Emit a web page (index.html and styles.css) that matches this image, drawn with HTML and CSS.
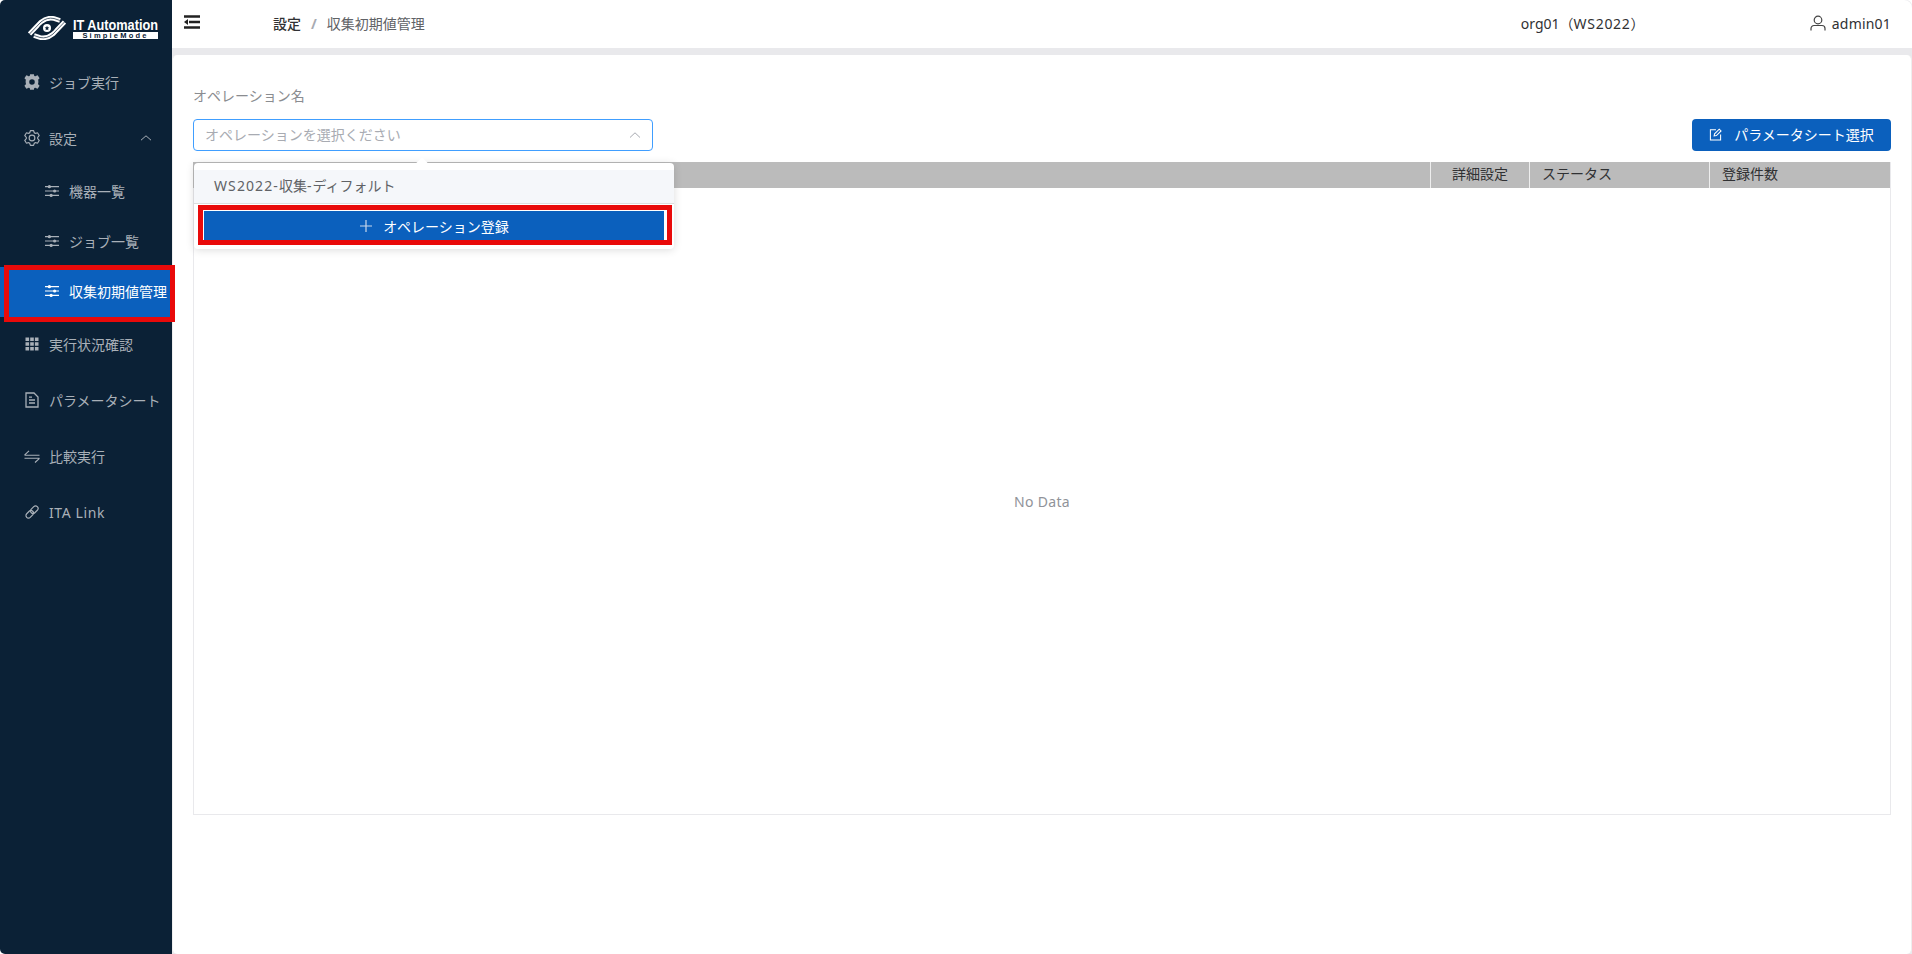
FILE: index.html
```html
<!DOCTYPE html>
<html lang="ja">
<head>
<meta charset="utf-8">
<title>収集初期値管理</title>
<link rel="stylesheet" href="styles.css">
</head>
<body>
<div class="app">
  <aside class="sidebar">
    <div class="logo">
      <svg class="logo-mark" viewBox="0 0 38 24" width="38" height="24">
        <g fill="none" stroke="#fff" stroke-linecap="butt">
          <path d="M1.500 18 L13 6 Q19 1 26 2.500 L32 4.500" stroke-width="4.600"/>
          <path d="M36.500 6 L25 18 Q19 23 12 21.500 L6 19.500" stroke-width="4.600"/>
        </g>
        <g fill="none" stroke="#0b2136" stroke-width=".7">
          <path d="M1.500 18 L13 6 Q19 1 26 2.500 L32 4.500"/>
          <path d="M36.500 6 L25 18 Q19 23 12 21.500 L6 19.500"/>
        </g>
        <ellipse cx="19" cy="12" rx="8.500" ry="5.500" fill="#0b2136" transform="rotate(-14 19 12)"/>
        <circle cx="19" cy="12" r="4" fill="#fff"/>
        <path d="M19 9.800l.7 1.500 1.600.2-1.200 1.100.3 1.600-1.400-.8-1.400.8.300-1.600-1.200-1.100 1.600-.2z" fill="#0b2136"/>
      </svg>
      <div class="logo-text">
        <span class="logo-title">IT Automation</span>
        <span class="logo-sub">SimpleMode</span>
      </div>
    </div>
    <nav class="nav">
      <a class="row">
        <svg class="ic" viewBox="0.500 0.500 15 15"><circle cx="8" cy="8" r="4.300" fill="none" stroke="currentColor" stroke-width="3.400"/><path d="M6.200 0.800h3.600l.5 2.600h-4.600zM6.200 15.200h3.600l.5-2.600h-4.600zM0.900 4.600l1.800-3 2.500 1-2.300 3.900zM15.100 11.400l-1.800 3-2.500-1 2.300-3.900zM0.900 11.400l1.800 3 2.500-1-2.300-3.900zM15.100 4.600l-1.800-3-2.500 1 2.300 3.900z" fill="currentColor"/></svg>
        <span>ジョブ実行</span>
      </a>
      <a class="row">
        <svg class="ic" viewBox="64 64 896 896"><path fill="currentColor" d="M600.704 64a32 32 0 0 1 30.464 22.208l35.2 109.376c14.784 7.232 28.928 15.36 42.432 24.512l112.384-24.192a32 32 0 0 1 34.432 15.36L944.32 364.8a32 32 0 0 1-4.032 37.504l-77.12 85.12a357.12 357.12 0 0 1 0 49.024l77.12 85.248a32 32 0 0 1 4.032 37.504l-88.704 153.6a32 32 0 0 1-34.432 15.296L708.8 803.904c-13.44 9.088-27.648 17.28-42.368 24.512l-35.264 109.376A32 32 0 0 1 600.704 960H423.296a32 32 0 0 1-30.464-22.208L357.696 828.48a351.616 351.616 0 0 1-42.56-24.64l-112.32 24.256a32 32 0 0 1-34.432-15.36L79.68 659.2a32 32 0 0 1 4.032-37.504l77.12-85.248a357.12 357.12 0 0 1 0-48.896l-77.12-85.248A32 32 0 0 1 79.68 364.8l88.704-153.6a32 32 0 0 1 34.432-15.296l112.32 24.256c13.568-9.152 27.776-17.408 42.56-24.64l35.2-109.312A32 32 0 0 1 423.232 64H600.64zm-23.424 64H446.72l-36.352 113.088-24.512 11.968a294.113 294.113 0 0 0-34.816 20.096l-22.656 15.36-116.224-25.088-65.28 113.152 79.68 88.192-1.92 27.136a293.12 293.12 0 0 0 0 40.192l1.920 27.136-79.808 88.192 65.344 113.152 116.224-25.024 22.656 15.296a294.113 294.113 0 0 0 34.816 20.096l24.512 11.968L446.72 896h130.688l36.48-113.152 24.448-11.904a288.282 288.282 0 0 0 34.752-20.096l22.592-15.296 116.288 25.024 65.28-113.152-79.744-88.192 1.92-27.136a293.12 293.12 0 0 0 0-40.256l-1.92-27.136 79.808-88.128-65.344-113.152-116.288 24.96-22.592-15.232a287.616 287.616 0 0 0-34.752-20.096l-24.448-11.904L577.344 128zM512 320a192 192 0 1 1 0 384 192 192 0 0 1 0-384zm0 64a128 128 0 1 0 0 256 128 128 0 0 0 0-256z"/></svg>
        <span>設定</span>
        <svg class="chev" viewBox="0 0 12 12"><path d="M1 8.200 6 3.800l5 4.400" fill="none" stroke="currentColor" stroke-width="1"/></svg>
      </a>
      <a class="row sub">
        <svg class="ic" viewBox="0 0 16 16"><path d="M0 3h16M0 8h16M0 13h16" stroke="currentColor" stroke-width="1.400" fill="none"/><circle cx="5" cy="3" r="1.800" fill="currentColor"/><circle cx="11" cy="8" r="1.800" fill="currentColor"/><circle cx="7" cy="13" r="1.800" fill="currentColor"/></svg>
        <span>機器一覧</span>
      </a>
      <a class="row sub">
        <svg class="ic" viewBox="0 0 16 16"><path d="M0 3h16M0 8h16M0 13h16" stroke="currentColor" stroke-width="1.400" fill="none"/><circle cx="5" cy="3" r="1.800" fill="currentColor"/><circle cx="11" cy="8" r="1.800" fill="currentColor"/><circle cx="7" cy="13" r="1.800" fill="currentColor"/></svg>
        <span>ジョブ一覧</span>
      </a>
      <a class="row sub active">
        <svg class="ic" viewBox="0 0 16 16"><path d="M0 3h16M0 8h16M0 13h16" stroke="currentColor" stroke-width="1.400" fill="none"/><circle cx="5" cy="3" r="1.800" fill="currentColor"/><circle cx="11" cy="8" r="1.800" fill="currentColor"/><circle cx="7" cy="13" r="1.800" fill="currentColor"/></svg>
        <span>収集初期値管理</span>
      </a>
      <a class="row">
        <svg class="ic" viewBox="0 0 16 16"><path fill="currentColor" d="M1.500 1.500h3.600v3.600H1.500zM6.200 1.500h3.600v3.600H6.200zM10.900 1.500h3.600v3.600h-3.600zM1.500 6.200h3.600v3.600H1.500zM6.200 6.200h3.600v3.600H6.200zM10.900 6.200h3.600v3.600h-3.600zM1.500 10.900h3.600v3.600H1.500zM6.200 10.900h3.600v3.600H6.200zM10.900 10.900h3.600v3.600h-3.600z"/></svg>
        <span>実行状況確認</span>
      </a>
      <a class="row">
        <svg class="ic" viewBox="0 0 16 16"><path d="M2 1h8l4 4v10H2zM5 8h6M5 11h6M5 5.200h3" fill="none" stroke="currentColor" stroke-width="1.300"/></svg>
        <span>パラメータシート</span>
      </a>
      <a class="row">
        <svg class="ic" viewBox="0 0 16 16"><path d="M0.500 7.200 5 2.800M0.500 7.200H15.500M15.500 10.300H0.500M15.500 10.300 11 14.500" fill="none" stroke="currentColor" stroke-width="1.100"/></svg>
        <span>比較実行</span>
      </a>
      <a class="row">
        <svg class="ic" viewBox="0 0 16 16"><g fill="none" stroke="currentColor" stroke-width="1.200" transform="rotate(-45 8 8)"><rect x="0.500" y="5.500" width="8.500" height="5" rx="2.500"/><rect x="7" y="5.500" width="8.500" height="5" rx="2.500"/></g></svg>
        <span class="ls-link">ITA Link</span>
      </a>
    </nav>
  </aside>

  <div class="main">
    <header class="topbar">
      <svg class="fold" viewBox="0 0 16 14"><path d="M0 1.500h16M5 7H16M0 12.500h16" stroke="#222" stroke-width="2.400" fill="none"/><path d="M4 4 0 7l4 3z" fill="#222"/></svg>
      <div class="crumbs">
        <b>設定</b><i>/</i><span>収集初期値管理</span>
      </div>
      <div class="org">org01（<span class="ls-org">WS2022</span>）</div>
      <div class="user">
        <svg viewBox="0 0 16 16" width="16" height="16"><circle cx="8" cy="5" r="3.800" fill="none" stroke="#444" stroke-width="1.200"/><path d="M1 15.500v-2a3 3 0 0 1 3-3h8a3 3 0 0 1 3 3v2" fill="none" stroke="#444" stroke-width="1.200"/></svg>
        <span class="ls-user">admin01</span>
      </div>
    </header>

    <main class="card">
      <label class="field-label">オペレーション名</label>
      <div class="toolbar">
        <div class="select">
          <span>オペレーションを選択ください</span>
          <svg viewBox="0 0 12 12" width="12" height="12"><path d="M1 8.500 6 3.800l5 4.700" fill="none" stroke="#a8abb2" stroke-width="1"/></svg>
        </div>
        <button class="btn">
          <svg viewBox="0 0 14 14" width="13" height="13"><path d="M7.500 2H1.500v11h11V7" fill="none" stroke="#fff" stroke-width="1.100"/><path d="M5.500 8.500 6 6.300 11 1.200 13 3.200 8 8.200z" fill="none" stroke="#fff" stroke-width="1.100"/></svg>
          <span>パラメータシート選択</span>
        </button>
      </div>

      <section class="table">
        <div class="thead">
          <div></div>
          <div class="center">詳細設定</div>
          <div>ステータス</div>
          <div>登録件数</div>
        </div>
        <div class="tbody">No Data</div>
      </section>

      <div class="popper">
        <span class="arrow"></span>
        <div class="option"><span class="ls-opt">WS2022-</span>収集<span class="ls-opt">-</span>ディフォルト</div>
        <div class="popper-foot">
          <div class="add">
            <svg viewBox="0 0 14 14" width="14" height="14"><path d="M7 1v12M1 7h12" stroke="#c9d8ec" stroke-width="1.200" fill="none"/></svg>
            <span>オペレーション登録</span>
          </div>
        </div>
      </div>
      <div class="mark mark-add"></div>
    </main>
  </div>
  <div class="mark mark-nav"></div>
</div>
</body>
</html>
```

FILE: styles.css
```css
* { box-sizing: border-box; }
html, body { margin: 0; height: 100%; background: #fff; }
body {
  font-family: "Noto Sans", "Noto Sans CJK JP", sans-serif;
  font-size: 14px;
  color: #303133;
  overflow: hidden;
}
.app { position: relative; display: flex; width: 1912px; height: 954px; }
.ls-link { letter-spacing: .6px; }
.ls-org { letter-spacing: .7px; }
.ls-user { letter-spacing: .2px; }
.ls-opt { letter-spacing: 1.100px; }

/* Sidebar */
.sidebar { width: 172px; flex: none; background: #0b2136; color: #a9b0b8; border-top-left-radius: 5px; border-bottom-left-radius: 5px; }
.logo { height: 55px; padding: 16px 0 0 28px; display: flex; gap: 7px; align-items: flex-start; }
.logo-mark { flex: none; }
.logo-text { display: flex; flex-direction: column; width: 85px; padding-top: 2px; }
.logo-title { font-family: "Liberation Sans", sans-serif; font-weight: 700; font-size: 15.500px; line-height: 13px; color: #fff; white-space: nowrap; transform: scaleX(.82); transform-origin: left center; }
.logo-sub { margin-top: 1px; height: 7px; background: #fff; color: #0b2136; font-family: "Liberation Sans", sans-serif; font-weight: 700; font-size: 7.500px; line-height: 7px; letter-spacing: 2.200px; text-align: center; white-space: nowrap; overflow: hidden; }
.nav { display: flex; flex-direction: column; }
.row { display: flex; align-items: center; height: 56px; padding: 0 0 2px 24px; gap: 9px; white-space: nowrap; }
.row.sub { height: 50px; padding-left: 45px; gap: 10px; }
.row.active { background: #0b60bd; color: #fff; }
.ic { width: 16px; height: 16px; flex: none; }
.row.sub .ic { width: 14px; height: 14px; }
.chev { width: 12px; height: 12px; margin-left: auto; margin-right: 20px; }

/* Main */
.main { flex: 1; min-width: 0; display: flex; flex-direction: column; background: #e9e9ec; border-top-right-radius: 6px; }
.topbar { height: 48px; flex: none; display: flex; align-items: center; background: #fff; border-top-right-radius: 8px; padding: 0 21px 2px 12px; }
.fold { width: 16px; height: 14px; flex: none; margin-bottom: 3px; }
.crumbs { margin-left: 73px; display: flex; align-items: center; color: #606266; }
.crumbs b { font-weight: 500; color: #303133; }
.crumbs i { font-style: normal; color: #a8abb2; margin: 0 10px; font-weight: 700; }
.org { margin-left: 1096px; color: #303133; white-space: nowrap; }
.user { margin-left: auto; display: flex; align-items: center; gap: 6px; color: #303133; }

.card {
  position: relative;
  flex: 1;
  margin-top: 7px;
  padding: 32px 20px 0 20px;
  background: #fff;
  border: 1px solid #eee;
  border-top: 0;
  border-bottom: 0;
  border-radius: 5px;
  display: flex;
  flex-direction: column;
  min-height: 0;
}
.field-label { height: 18px; line-height: 18px; color: #8a8c90; }
.toolbar { margin-top: 14px; display: flex; justify-content: space-between; height: 32px; }
.select { width: 460px; height: 32px; padding: 0 11px 3px; border: 1px solid #409eff; border-radius: 4px; display: flex; align-items: center; justify-content: space-between; color: #a8abb2; }
.select svg { margin-top: 3px; }
.btn { width: 199px; height: 32px; border: 0; border-radius: 4px; background: #0b60bd; color: #fff; font: inherit; display: flex; align-items: center; justify-content: center; gap: 12px; padding: 0 0 2px 0; }

.table { margin-top: 11px; width: 1698px; height: 653px; border: 1px solid #e9e9ec; border-top: 0; display: flex; flex-direction: column; }
.thead { height: 26px; flex: none; display: grid; grid-template-columns: 1238px 99px 180px 1fr; background: #bbb; color: #303133; margin-left: -1px; }
.thead > div { padding-left: 12px; line-height: 23px; border-right: 1px solid #eee; }
.thead > div:last-child { border-right: 0; }
.thead > .center { padding: 0; text-align: center; }
.tbody { flex: 1; display: flex; align-items: center; justify-content: center; color: #909399; letter-spacing: .3px; }

/* Popper over the table */
.popper {
  position: absolute; left: 21px; top: 108px; width: 480px; height: 86px;
  padding-top: 7px; background: #fff; border-radius: 4px;
  box-shadow: 0 1px 8px rgba(0, 0, 0, .14);
}
.arrow { position: absolute; left: 224px; top: -4px; width: 8px; height: 8px; background: #fff; transform: rotate(45deg); }
.option { position: relative; height: 34px; line-height: 31px; padding-left: 20px; background: #f5f7fa; color: #606266; border-bottom: 1px solid #ddd; white-space: nowrap; }
.popper-foot { padding: 6px 7px 0 9px; }
.add { height: 30px; padding-top: 1px; background: #0b60bd; color: #fff; display: flex; align-items: center; justify-content: center; gap: 10px; border: 1px solid #fff; border-width: 1px 3px 0 1px; }

/* Red annotation frames */
.mark { position: absolute; border: 5px solid #e90a0a; pointer-events: none; }
.mark-nav { left: 4px; top: 265px; width: 171px; height: 57px; }
.mark-add { left: 25px; top: 150px; width: 474px; height: 40px; }
```
